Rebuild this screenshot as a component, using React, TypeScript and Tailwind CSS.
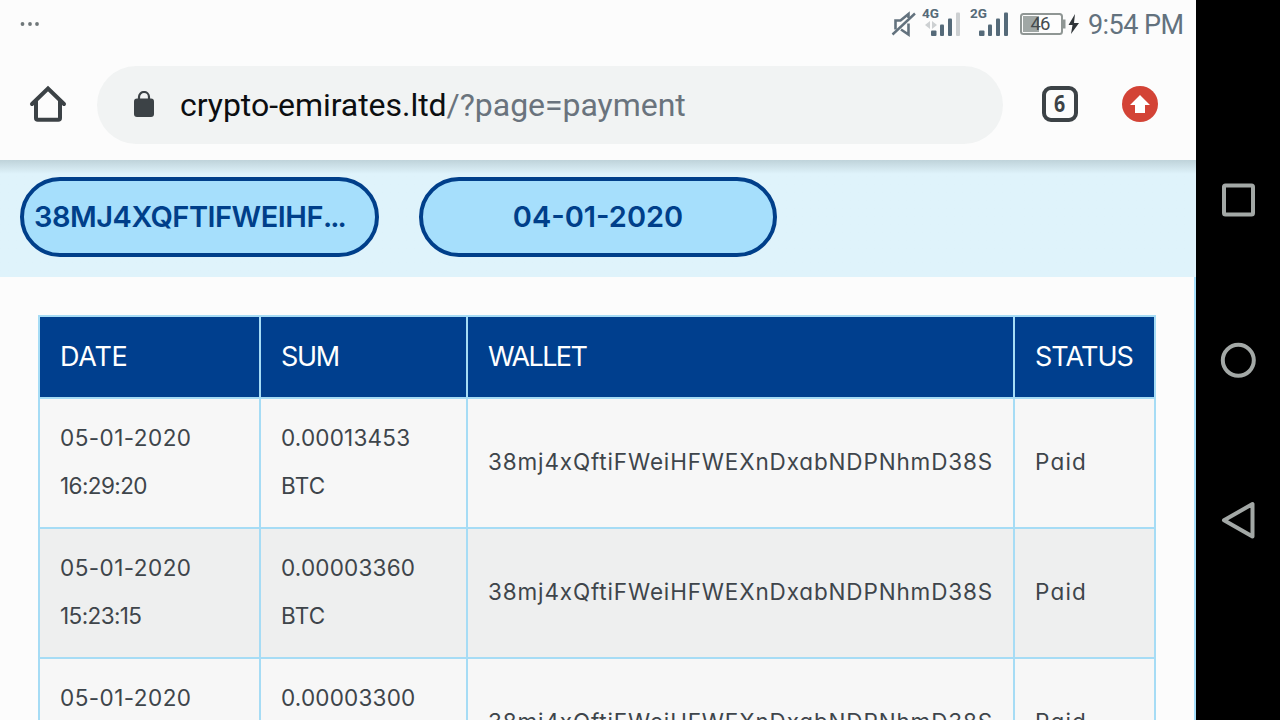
import type React from "react";

const payments = [
  { date: "05-01-2020", time: "16:29:20", sum: "0.00013453" },
  { date: "05-01-2020", time: "15:23:15", sum: "0.00003360" },
  { date: "05-01-2020", time: "14:21:08", sum: "0.00003300" },
];

const wallet = "38mj4xQftiFWeiHFWEXnDxabNDPNhmD38S";

const StatusBar: React.FC = () => (
  <div className="flex h-12 items-center justify-between pl-5 pr-3">
    <svg width="20" height="6" viewBox="0 0 20 6" fill="#6f7779">
      <circle cx="2.500" cy="3" r="1.900" />
      <circle cx="10" cy="3" r="1.900" />
      <circle cx="17" cy="3" r="1.900" />
    </svg>
    <div className="flex items-center text-[#63727e]">
      <svg className="-ml-px" width="26" height="28" viewBox="0 0 26 28" fill="none" stroke="currentColor" strokeWidth="2.600">
        <path d="M1.500 24.500 24 3.500" strokeWidth="2.400" />
        <path d="M4.500 19.500V10.500h5l8-6.500v4M10 19.500l7.500 5V13.500" />
      </svg>
      <svg className="-mt-1.5 ml-[5px]" width="40" height="34" viewBox="0 0 40 34" fill="#556a79">
        <text x="0" y="14" fontFamily="Roboto" fontWeight="700" fontSize="13.500" textLength="17">4G</text>
        <path d="M8 17v8l-5-4zM10 17v8l5-4z" fill="#cdd0d2" />
        <rect x="9" y="26.500" width="5.500" height="5.500" rx="1" />
        <rect x="18" y="20.500" width="4" height="11.500" rx="1" />
        <rect x="26" y="14.500" width="4" height="17.500" rx="1" />
        <rect x="34" y="8.500" width="4" height="23.500" rx="1" fill="#cdd0d2" />
      </svg>
      <svg className="-mt-1.5 ml-2" width="40" height="34" viewBox="0 0 40 34" fill="#556a79">
        <text x="0" y="14" fontFamily="Roboto" fontWeight="700" fontSize="13.500" textLength="17">2G</text>
        <rect x="9" y="26.500" width="5.500" height="5.500" rx="1" />
        <rect x="18" y="20.500" width="4" height="11.500" rx="1" />
        <rect x="26" y="14.500" width="4" height="17.500" rx="1" />
        <rect x="34" y="8.500" width="4" height="23.500" rx="1" />
      </svg>
      <svg className="ml-[9px]" width="62" height="26" viewBox="0 0 62 26">
        <rect x="2" y="3" width="41" height="20" rx="2.500" fill="#fdfdfd" stroke="#8f9694" strokeWidth="2" />
        <rect x="4" y="5" width="16" height="16" fill="#a0a7a5" />
        <path d="M44 8.500h2.500v9H44" fill="#8f9694" />
        <text x="11.500" y="19" fontFamily="Roboto" fontSize="18.500" fill="#444b4f" textLength="20">46</text>
        <path d="M56 3 49.500 14h4l-1.500 9L60 12h-5z" fill="#2f3438" />
      </svg>
      <span className="ml-[7px] w-[96px] translate-y-px whitespace-nowrap font-[Roboto] text-[27px] leading-8 tracking-[-0.55px]">
        9:54 PM
      </span>
    </div>
  </div>
);

const Toolbar: React.FC = () => (
  <div className="flex h-[112px] items-start pl-7 pt-[18px]">
    <svg className="mt-[18px]" width="40" height="40" viewBox="0 0 40 40" fill="none" stroke="#3c4246" strokeWidth="4">
      <path d="M4 20 20 4.500 36 20" strokeLinecap="round" />
      <path d="M8 17v17a1.800 1.800 0 0 0 1.800 1.800h20.400A1.800 1.800 0 0 0 32 34V17" />
    </svg>
    <div className="ml-[29px] flex h-[78px] w-[906px] items-center rounded-full bg-[#f1f3f3] pl-9">
      <svg width="22" height="28" viewBox="0 0 22 28">
        <path d="M6 10V6a5 5 0 0 1 10 0v4" fill="none" stroke="#3c4246" strokeWidth="2.200" />
        <rect x="1" y="7.500" width="20" height="18.500" rx="3" fill="#3c4246" />
      </svg>
      <span className="ml-[25px] whitespace-nowrap font-[Roboto] text-[32px] tracking-[-0.04px] text-[#0c0e10]">
        crypto-emirates.ltd<span className="text-[#6a737d]">/?page=payment</span>
      </span>
    </div>
    <div className="ml-[39px] mt-5 flex size-9 items-center justify-center rounded-[9px] border-4 border-[#3c4246] font-['Open_Sans'] text-[23px] font-bold leading-none text-[#3c4246]">
      <span className="-translate-y-px scale-x-85">6</span>
    </div>
    <svg className="ml-11 mt-5" width="36" height="36" viewBox="0 0 36 36">
      <circle cx="18" cy="18" r="18" fill="#d34336" />
      <path d="M18 9 28 19h-5v8H13v-8H8z" fill="#fff" />
    </svg>
  </div>
);

const Filters: React.FC = () => (
  <div className="flex h-[117px] gap-10 bg-[#dff3fb] bg-linear-to-b from-[#bfd3da] via-[#dff3fb] via-[14px] to-[#dff3fb] pl-5 pt-[17px] text-[29px] font-semibold text-[#003f8a]">
    <div className="flex h-20 w-[359px] items-center whitespace-nowrap rounded-full border-4 border-[#003f8a] bg-[#a6dffc] pl-[10px]">
      <span className="tracking-[-0.500px]">38MJ4XQFTIFWEIHF<span className="tracking-[-2px]">...</span></span>
    </div>
    <div className="flex h-20 w-[358px] items-center justify-center rounded-full border-4 border-[#003f8a] bg-[#a6dffc]">
      <span>04-01-2020</span>
    </div>
  </div>
);

const PaymentsTable: React.FC = () => (
  <table className="w-[1118px] table-fixed border-separate border-spacing-[2px] bg-[#a6dcf5]">
    <thead>
      <tr className="h-20 bg-[#003f8e] text-left text-[27px] text-white">
        <th className="w-[219px] pl-5 font-normal tracking-[-0.25px]">DATE</th>
        <th className="w-[205px] pl-5 font-normal tracking-[-1.300px]">SUM</th>
        <th className="w-[545px] pl-5 font-normal tracking-[-1.600px]">WALLET</th>
        <th className="w-[139px] pl-5 font-normal tracking-[-0.95px]">STATUS</th>
      </tr>
    </thead>
    <tbody className="text-[22.500px] leading-[48px] text-[#3e454b]">
      {payments.map((p) => (
        <tr key={p.time} className="h-32 bg-[#f7f7f7] even:bg-[#eeefef]">
          <td className="pb-0.5 pl-5">
            <span className="tracking-[0.45px]">{p.date}</span>
            <br />
            <span className="tracking-[-0.6px]">{p.time}</span>
          </td>
          <td className="pb-0.5 pl-5 tracking-[0.2px]">
            {p.sum}
            <br />
            BTC
          </td>
          <td className="whitespace-nowrap pb-0.5 pl-5 tracking-[0.850px]">{wallet}</td>
          <td className="pb-0.5 pl-5 tracking-[1.200px]">Paid</td>
        </tr>
      ))}
    </tbody>
  </table>
);

const SystemNav: React.FC = () => (
  <div className="flex w-[84px] flex-col items-center justify-center gap-[120px] bg-black">
    <svg width="40" height="40" viewBox="0 0 40 40" fill="none" stroke="#a3a8a6" strokeWidth="4">
      <rect x="6" y="5.500" width="29" height="29" rx="1.500" />
    </svg>
    <svg width="40" height="40" viewBox="0 0 40 40" fill="none" stroke="#a3a8a6" strokeWidth="4">
      <circle cx="20.300" cy="20.300" r="15.500" />
    </svg>
    <svg width="40" height="40" viewBox="0 0 40 40" fill="none" stroke="#a3a8a6" strokeWidth="4" strokeLinejoin="round">
      <path d="M34.500 4v32.500L6 20.300z" />
    </svg>
  </div>
);

const App: React.FC = () => {
  return (
    <div className="flex h-[720px] w-[1280px] overflow-hidden bg-[#fcfcfc] font-[Inter,sans-serif] [font-feature-settings:'cv11']">
      <div className="w-[1196px]">
        <StatusBar />
        <Toolbar />
        <Filters />
        <div className="h-[443px] overflow-hidden border-r-2 border-[#a6dffc] pl-[38px] pt-[38px]">
          <PaymentsTable />
        </div>
      </div>
      <SystemNav />
    </div>
  );
};

export default App;
